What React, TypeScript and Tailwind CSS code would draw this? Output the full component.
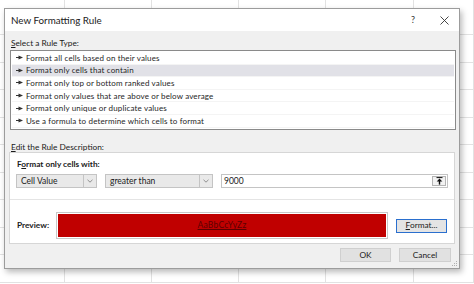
import React from 'react';

const rules = [
  'Format all cells based on their values',
  'Format only cells that contain',
  'Format only top or bottom ranked values',
  'Format only values that are above or below average',
  'Format only unique or duplicate values',
  'Use a formula to determine which cells to format',
];

const font = "font-['Lato','Noto_Sans',sans-serif]";

function Pointer() {
  return (
    <svg width="7" height="5" viewBox="0 0 7 5" className="shrink-0">
      <path d="M0 2.5H3" stroke="#333" strokeWidth="1" />
      <path d="M2.5 0.4L7 2.5L2.5 4.6Z" fill="#333" />
    </svg>
  );
}

function Chevron() {
  return (
    <svg width="6" height="4" viewBox="0 0 6 4">
      <path d="M0.5 0.8L3 3.2L5.5 0.8" fill="none" stroke="#777" strokeWidth="0.8" />
    </svg>
  );
}

function Dropdown({ label, width }: { label: string; width: string }) {
  return (
    <div className={`flex h-[14px] ${width} border border-[#c4c4c4] bg-[#e9e9e9]`}>
      <div className="flex-1 flex items-center pl-[4px] text-[8.5px] text-[#1a1a1a]">{label}</div>
      <div className="w-[13px] flex items-center justify-center border-l border-[#c4c4c4]">
        <Chevron />
      </div>
    </div>
  );
}

export default function App() {
  return (
    <div className={`relative w-[474px] h-[284px] overflow-hidden bg-white ${font}`}>
      {/* spreadsheet grid behind the dialog */}
      <div className="grid grid-cols-[65px_87px_87px_87px_88px_60px] grid-rows-[35px_repeat(9,27.5px)]">
        {Array.from({ length: 60 }).map((_, i) => (
          <div key={i} className="border-r border-b border-[#e2e2e2]" />
        ))}
      </div>

      <div className="absolute left-[4px] top-[8px] w-[456px] h-[261px] flex flex-col border border-[#9c9c9c] bg-[#f0f0f0] shadow-[2px_3px_6px_rgba(0,0,0,0.28)]">
        <div className="h-[22px] shrink-0 bg-white flex items-center pl-[6px]">
          <span className="flex-1 text-[9.8px] text-[#222]">New Formatting Rule</span>
          <span className="w-[10px] text-center text-[9px] text-[#333]">?</span>
          <svg width="9" height="9" viewBox="0 0 9 9" className="ml-[22px] mr-[10px]">
            <path d="M0.5 0.5L8.5 8.5M8.5 0.5L0.5 8.5" stroke="#333" strokeWidth="0.9" />
          </svg>
        </div>

        <div className="flex-1 flex flex-col pl-[5px] pr-[3px] pt-[7px] text-[#1a1a1a]">
          <div className="h-[10px] leading-[10px] pl-[1px] text-[8.3px]">
            <span className="underline">S</span>elect a Rule Type:
          </div>
          <div className="mt-[2px] h-[80px] border border-[#8a8a8a] bg-white pt-[1px] px-[1px]">
            {rules.map((r, i) => (
              <div
                key={r}
                className={`h-[12.6px] flex items-center gap-[3px] pl-[4px] text-[8px] tracking-[0.15px] text-[#1e1e1e] border-b border-[#f4f4f4] ${
                  i === 1 ? 'bg-[#e1e1e7]' : ''
                }`}
              >
                <Pointer />
                <span>{r}</span>
              </div>
            ))}
          </div>

          <div className="mt-[12px] h-[10px] leading-[10px] pl-[1px] text-[8.3px]">
            <span className="underline">E</span>dit the Rule Description:
          </div>
          <div className="-ml-[1px] mr-[1px] h-[92px] border border-[#d6d6d6] bg-white flex flex-col">
            <div className="pl-[7px] pt-[6px] h-[16px] leading-[10px] text-[8.3px] font-bold">
              F<span className="underline">o</span>rmat only cells with:
            </div>
            <div className="mt-[5px] flex gap-[7px] pl-[6px] pr-[6px]">
              <Dropdown label="Cell Value" width="w-[81px]" />
              <Dropdown label="greater than" width="w-[108px] ml-[1px]" />
              <div className="ml-[1px] flex-1 h-[14px] flex border border-[#c4c4c4] bg-white">
                <div className="flex-1 flex items-center pl-[2px] text-[8.5px]">9000</div>
                <div className="m-[1px] w-[14px] flex items-center justify-center border border-[#b4b4b4] bg-[#f2f2f2]">
                  <svg width="7" height="8" viewBox="0 0 7 8">
                    <path d="M0.5 0.6H6.5" stroke="#111" strokeWidth="1" />
                    <path d="M3.5 1.6L6.3 4.6H0.7Z" fill="#111" />
                    <path d="M3.5 4V7.6" stroke="#111" strokeWidth="1.4" />
                  </svg>
                </div>
              </div>
            </div>
            <div className="mt-[11px] border-t border-[#e4e4e4]" />
            <div className="mt-[12px] flex items-center pl-[7px] pr-[7px]">
              <div className="w-[39px] text-[8.3px] font-bold">Preview:</div>
              <div className="w-[332px] h-[27px] border border-[#c8c8c8] p-[1px] bg-white">
                <div className="h-full bg-[#c00000] flex items-center justify-center text-[8.5px] tracking-[0.2px] text-[#5c0000] underline">
                  AaBbCcYyZz
                </div>
              </div>
              <button className="ml-[8px] w-[51px] h-[14px] border border-[#2a6fce] bg-[#e4e4e4] text-[8.3px] leading-none">
                <span className="underline">F</span>ormat...
              </button>
            </div>
          </div>

          <div className="mt-[4px] flex justify-end gap-[8px] pr-[5px]">
            <button className="w-[51px] h-[14px] border border-[#cfcfcf] bg-[#e1e1e1] text-[8.3px] leading-none">
              OK
            </button>
            <button className="w-[52px] h-[14px] border border-[#cfcfcf] bg-[#e1e1e1] text-[8.3px] leading-none">
              Cancel
            </button>
          </div>
        </div>

        <svg width="6" height="6" viewBox="0 0 6 6" className="absolute right-[1px] bottom-[1px]">
          <rect x="4" y="0" width="1" height="1" fill="#b0b0b0" />
          <rect x="2" y="2" width="1" height="1" fill="#b0b0b0" />
          <rect x="4" y="2" width="1" height="1" fill="#b0b0b0" />
          <rect x="0" y="4" width="1" height="1" fill="#b0b0b0" />
          <rect x="2" y="4" width="1" height="1" fill="#b0b0b0" />
          <rect x="4" y="4" width="1" height="1" fill="#b0b0b0" />
        </svg>
      </div>
    </div>
  );
}
